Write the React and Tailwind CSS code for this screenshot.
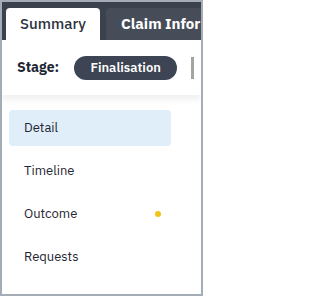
import React from "react";

const navItems = [
  { label: "Detail", active: true },
  { label: "Timeline" },
  { label: "Outcome", dot: true },
  { label: "Requests" },
];

export default function App() {
  return (
    <div
      className="w-[203px] h-[296px] border-2 border-[#a4adb6] bg-white overflow-hidden flex flex-col"
      style={{ fontFamily: '"IBM Plex Sans", "Noto Sans", sans-serif' }}
    >
      <div className="h-[38px] bg-[#3b414d] flex items-end gap-[6px] pl-[4px] shrink-0">
        <div className="w-[94px] h-[32px] shrink-0 bg-white rounded-t-[4px] flex items-center justify-center text-[15px] font-medium text-[#2b313c]">
          Summary
        </div>
        <div className="flex-1 min-w-0 overflow-hidden h-[32px] bg-[#464d59] rounded-tl-[4px] flex items-center pl-[15px] text-[15px] font-bold text-white whitespace-nowrap">
          Claim Information
        </div>
      </div>

      <div className="h-[55px] flex items-center pl-[15px] shrink-0 shadow-[0_5px_6px_rgba(0,0,0,0.06)] relative">
        <span className="text-[14px] font-bold text-[#1e2533]">Stage:</span>
        <span className="ml-[15px] w-[103px] h-[24px] shrink-0 rounded-full bg-[#3d4454] text-white text-[13px] font-semibold flex items-center justify-center">
          Finalisation
        </span>
        <span className="ml-[14px] w-[3px] h-[22px] shrink-0 bg-[#a3a3a3]" />
      </div>

      <nav className="flex flex-col gap-[7px] pt-[15px] pl-[7px]">
        {navItems.map((item) => (
          <div
            key={item.label}
            className={`w-[162px] h-[36px] rounded-[4px] flex items-center justify-between pl-[15px] pr-[10px] text-[13px] text-[#1f2633] ${
              item.active ? "bg-[#dfeef8]" : ""
            }`}
          >
            <span>{item.label}</span>
            {item.dot && <span className="w-[6px] h-[6px] rounded-full bg-[#f3c316]" />}
          </div>
        ))}
      </nav>
    </div>
  );
}
